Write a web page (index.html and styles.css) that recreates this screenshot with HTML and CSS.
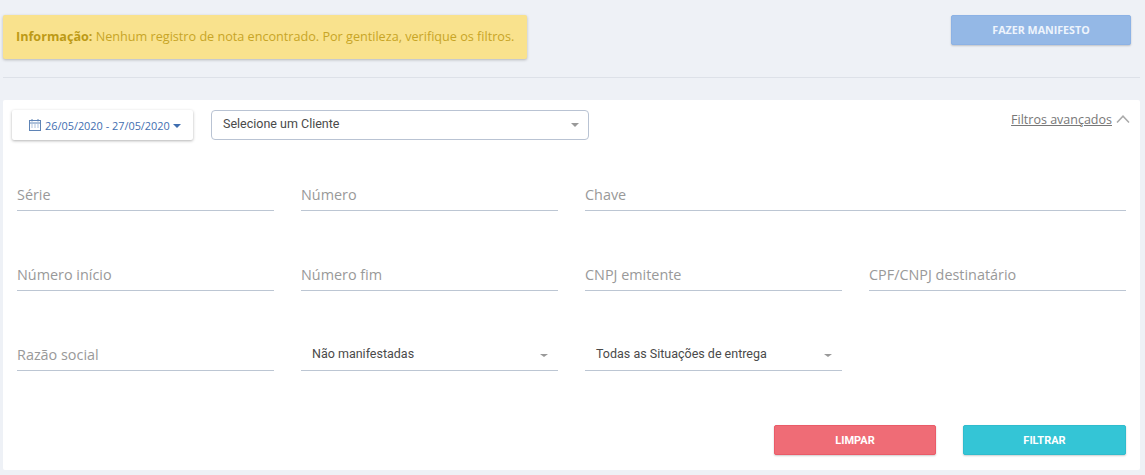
FILE: index.html
```html
<!DOCTYPE html>
<html lang="pt-BR">
<head>
    <meta charset="UTF-8">
    <meta name="viewport" content="width=device-width, initial-scale=1.0">
    <title>Manifesto de notas</title>
    <link rel="stylesheet" href="styles.css">
</head>
<body>
    <div class="top">
        <div class="alert"><strong>Informação:</strong> Nenhum registro de nota encontrado. Por gentileza, verifique os filtros.</div>
        <button class="btn btn-manifest" type="button">FAZER MANIFESTO</button>
    </div>
    <hr class="divider">

    <section class="card">
        <div class="card-head">
            <button class="date-btn" type="button">
                <svg class="cal" width="12" height="12" viewBox="0 0 12 12" fill="none" stroke="#5f84b6" stroke-width="1">
                    <rect x="0.5" y="1.5" width="11" height="10"/>
                    <path d="M0.5 4h11M3 0v2.5M9 0v2.5"/>
                    <path d="M2.5 6h1M5.5 6h1M8.5 6h1M2.5 8h1M5.5 8h1M8.5 8h1" stroke-width="1"/>
                </svg>
                <span>26/05/2020 - 27/05/2020</span>
                <span class="caret caret-blue"></span>
            </button>
            <div class="client-select">
                <span>Selecione um Cliente</span>
                <span class="caret"></span>
            </div>
            <a class="adv-link" href="#">Filtros avançados</a>
            <svg class="chevron" width="14" height="8" viewBox="0 0 14 8" fill="none" stroke="#aaa" stroke-width="1.5">
                <path d="M1 7.5 7 1.2l6 6.3"/>
            </svg>
        </div>

        <div class="filters">
            <div class="field">Série</div>
            <div class="field">Número</div>
            <div class="field span-2">Chave</div>

            <div class="field">Número início</div>
            <div class="field">Número fim</div>
            <div class="field">CNPJ emitente</div>
            <div class="field">CPF/CNPJ destinatário</div>

            <div class="field">Razão social</div>
            <div class="field field-select"><span>Não manifestadas</span><span class="caret"></span></div>
            <div class="field field-select"><span>Todas as Situações de entrega</span><span class="caret"></span></div>
        </div>

        <div class="actions">
            <button class="btn btn-clear" type="button">LIMPAR</button>
            <button class="btn btn-filter" type="button">FILTRAR</button>
        </div>
    </section>
</body>
</html>
```

FILE: styles.css
```css
html, body {
    margin: 0;
    height: 475px;
    overflow: hidden;
}

body {
    background-color: #eef1f6;
    font-family: "Open Sans", sans-serif;
}

/* Top row */
.top {
    display: flex;
    justify-content: space-between;
    align-items: flex-start;
    padding: 15px 14px 0 3px;
}

.alert {
    width: 524px;
    height: 44px;
    box-sizing: border-box;
    padding: 0 13px;
    line-height: 43px;
    font-size: 12.63px;
    white-space: nowrap;
    background-color: #f9e28d;
    color: #c8a526;
    border-radius: 2px;
    box-shadow: 0 1px 3px rgba(0, 0, 0, 0.25);
}

.alert strong {
    color: #bd9a16;
}

.divider {
    border: 0;
    border-top: 1px solid #dde1e8;
    margin: 18px 5px 22px 3px;
}

/* Buttons */
.btn {
    height: 30px;
    padding: 0;
    border-radius: 2px;
    color: #fff;
    font-weight: 700;
    font-size: 11px;
    cursor: pointer;
    box-shadow: 0 1px 2px rgba(0, 0, 0, 0.2);
}

.btn-manifest {
    width: 180px;
    font-family: "Open Sans", sans-serif;
    font-size: 10.7px;
    background-color: #94b8e6;
    border: 1px solid #8cb2e5;
    color: #eef4fc;
}

.btn-clear {
    width: 162px;
    font-family: Roboto, sans-serif;
    background-color: #ef6c76;
    border: 1px solid #ea5b68;
}

.btn-filter {
    width: 163px;
    font-family: Roboto, sans-serif;
    background-color: #34c5d6;
    border: 1px solid #2fbccd;
}

/* Card */
.card {
    width: 1137px;
    height: 370px;
    margin-left: 3px;
    box-sizing: border-box;
    padding: 10px 14px 0 9px;
    background-color: #fff;
    border-radius: 2px;
}

.card-head {
    display: flex;
    align-items: flex-start;
    margin-right: -4px;
}

.date-btn {
    display: flex;
    align-items: center;
    width: 181px;
    height: 30px;
    box-sizing: border-box;
    padding: 0 0 0 17px;
    margin: 0 18px 0 0;
    border: 0;
    background-color: #fff;
    border-radius: 2px;
    box-shadow: 0 1px 3px rgba(0, 0, 0, 0.3);
    color: #3f6eb0;
    font-family: "Open Sans", sans-serif;
    font-size: 10.9px;
}

.cal {
    margin-right: 4px;
}

.caret {
    width: 0;
    height: 0;
    border-left: 4px solid transparent;
    border-right: 4px solid transparent;
    border-top: 4px solid #999;
}

.caret-blue {
    margin: 2px 0 0 3px;
    border-top-color: #3f6eb0;
}

.client-select {
    display: flex;
    justify-content: space-between;
    align-items: center;
    width: 378px;
    height: 30px;
    box-sizing: border-box;
    padding: 0 9px 4px 11px;
    border: 1px solid #b9c3d3;
    border-radius: 4px;
    font-family: Roboto, sans-serif;
    font-size: 12.5px;
    color: #4a4a4a;
}

.client-select .caret {
    margin-top: 3px;
}

.adv-link {
    margin-left: auto;
    margin-top: 1px;
    font-size: 12.5px;
    color: #777;
}

.chevron {
    margin: 5px 0 0 4px;
}

/* Filter grid */
.filters {
    display: grid;
    grid-template-columns: repeat(4, 257px);
    column-gap: 27px;
    row-gap: 40px;
    margin: 31px 0 0 5px;
}

.field {
    height: 40px;
    box-sizing: border-box;
    padding-top: 14px;
    border-bottom: 1px solid #bcc6d3;
    font-size: 14.4px;
    line-height: 20px;
    color: #999;
}

.span-2 {
    grid-column: span 2;
}

.field-select {
    display: flex;
    justify-content: space-between;
    align-items: center;
    padding: 6px 10px 0 11px;
    font-family: Roboto, sans-serif;
    font-size: 12.5px;
    color: #4a4a4a;
}

.field-select .caret {
    border-top-width: 3px;
    margin-top: 3px;
}

/* Actions */
.actions {
    display: flex;
    justify-content: flex-end;
    gap: 27px;
    margin-top: 54px;
}
```
